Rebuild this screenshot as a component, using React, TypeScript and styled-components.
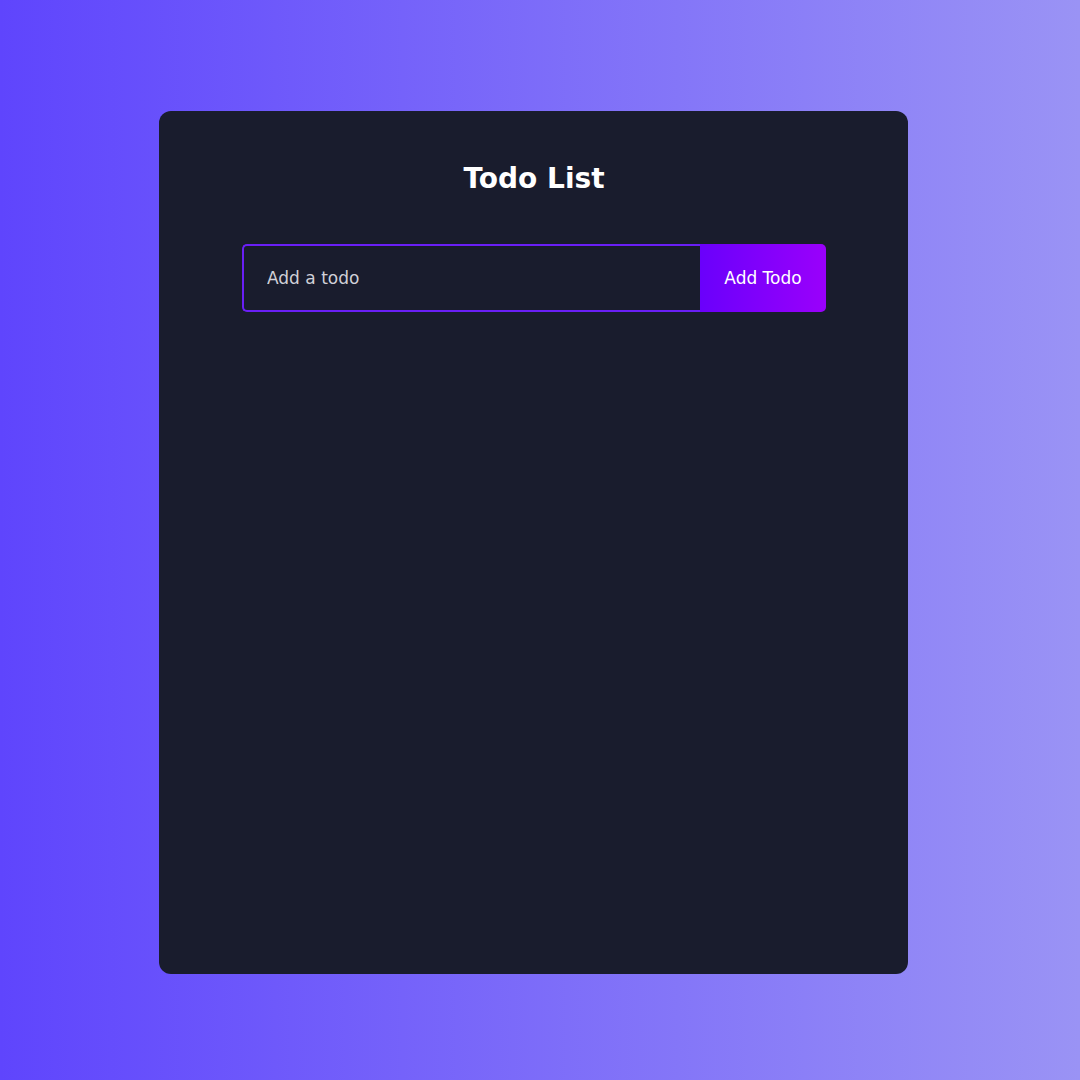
import styled, { createGlobalStyle } from 'styled-components'

const GlobalStyle = createGlobalStyle`
  html, body {
    margin: 0;
    padding: 0;
  }
  body {
    font-family: "DejaVu Sans", Verdana, sans-serif;
    background: linear-gradient(90deg, #5f45fd 0%, #9a93f5 100%);
    min-height: 100vh;
  }
`

const Page = styled.div`
  width: 1080px;
  height: 1080px;
  padding: 111px 0 0 159px;
  box-sizing: border-box;
`

const Card = styled.div`
  width: 749px;
  height: 863px;
  box-sizing: border-box;
  background: #191c2d;
  border-radius: 12px;
  padding: 41px 82px 0 83px;
  display: flex;
  flex-direction: column;
  align-items: center;
`

const Title = styled.h1`
  margin: 0 0 38px;
  font-size: 28px;
  font-weight: bold;
  color: #ffffff;
  line-height: 54px;
`

const Form = styled.form`
  display: flex;
  width: 584px;
  height: 68px;
`

const Input = styled.input`
  flex: 1;
  min-width: 0;
  box-sizing: border-box;
  height: 100%;
  padding: 0 23px;
  background: #191c2d;
  border: 2px solid #6a1ff6;
  border-right: none;
  border-radius: 5px 0 0 5px;
  color: #e0e0e0;
  font-family: inherit;
  font-size: 17px;
  outline: none;

  &::placeholder {
    color: #d0d0d8;
  }
`

const Button = styled.button`
  width: 126px;
  height: 100%;
  border: none;
  border-radius: 0 5px 5px 0;
  background: linear-gradient(90deg, #6a00fb 0%, #9a00fb 100%);
  color: #ffffff;
  font-family: inherit;
  font-size: 17px;
  cursor: pointer;
`

export default function App() {
  return (
    <>
      <GlobalStyle />
      <Page>
        <Card>
          <Title>Todo List</Title>
          <Form onSubmit={(e) => e.preventDefault()}>
            <Input placeholder="Add a todo" />
            <Button type="submit">Add Todo</Button>
          </Form>
        </Card>
      </Page>
    </>
  )
}
